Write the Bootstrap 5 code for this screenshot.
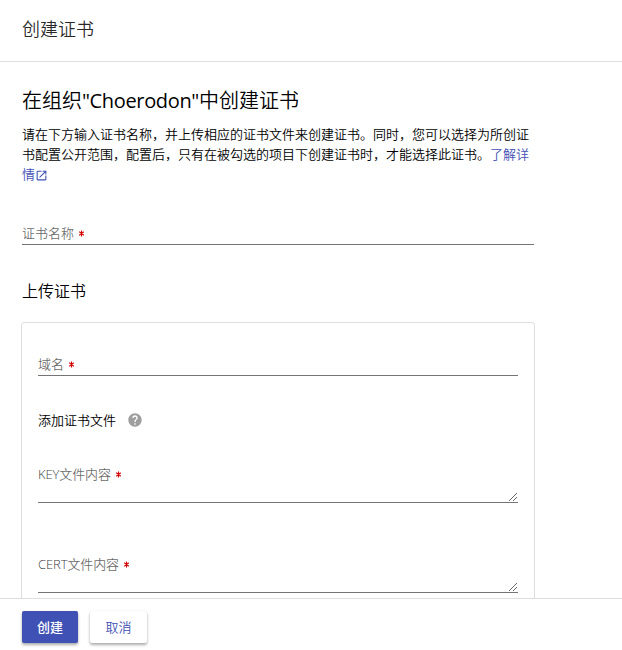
<!DOCTYPE html>
<html lang="zh-CN">
<head>
<meta charset="utf-8">
<meta name="viewport" content="width=device-width, initial-scale=1">
<title>创建证书</title>
<link href="https://cdn.jsdelivr.net/npm/bootstrap@5.3.0/dist/css/bootstrap.min.css" rel="stylesheet">
<style>
body{font-family:"Open Sans","Noto Sans CJK SC",sans-serif;font-size:13px;font-weight:350;line-height:20px;color:#000}
.page-head{height:62px;padding:0 22px 3px;border-bottom:1px solid #dedede;font-size:18px;color:rgba(0,0,0,.85)}
.page-body{padding:24px 22px 0;min-height:0}
.content{width:513px}
.content h1{font-size:20px;line-height:30px;font-weight:350;margin:0 0 8px}
.content h1 span{font-weight:500;letter-spacing:-.35px}
.content h2{font-size:16px;line-height:24px;font-weight:350;margin:34px 0 19px}
.brand-link{color:#3f51b5;text-decoration:none}
.brand-link:hover{color:#303f9f}
.field{border-bottom:1px solid #757575;color:rgba(0,0,0,.6);width:512px;height:22px}
.field-name{margin-top:39px}
.field-area{height:39px}
.field-key{margin-top:34px}
.field-cert{margin-top:51px}
.file-title{margin-top:34px}
.help-icon{margin-left:11px}
.panel{border:1px solid #dedede;border-radius:3px;padding:31px 16px 0;height:400px;width:514px;margin-left:-1px}
.panel .field{width:480px}
.req{color:#d50000;width:6px;height:7px;margin:7px 0 0 5px}
.latin{letter-spacing:-.1px}
.latin span{color:rgba(0,0,0,.82)}
.foot{height:52px;border-top:1px solid #dedede;padding:12px 22px;gap:12px}
.act{height:32px;width:57px;font-size:13px;line-height:20px;padding:6px 0;border-radius:2px;border:0;box-shadow:0 2px 3px rgba(0,0,0,.32),0 0 1px rgba(0,0,0,.15);font-weight:350}
.act-main,.act-main:hover{background:#3f51b5;color:#fff;width:56px;font-weight:500}
.act-alt,.act-alt:hover{background:#fff;color:#3f51b5}
</style>
<script src="https://cdn.jsdelivr.net/npm/bootstrap@5.3.0/dist/js/bootstrap.bundle.min.js"></script>
</head>
<body class="vh-100 overflow-hidden d-flex flex-column">
<svg class="d-none"><defs>
<symbol id="star" viewBox="0 0 6 7"><path d="M2.5 .5v6M.2 1.7l4.6 3.6M4.8 1.7L.2 5.3" fill="none" stroke="currentColor" stroke-width="1.1"/></symbol>
<symbol id="grip" viewBox="0 0 8 8"><path d="M0 8L8 0M4 8l4-4" fill="none" stroke="#444" stroke-width=".8"/></symbol>
</defs></svg>
<header class="page-head d-flex align-items-center flex-shrink-0">创建证书</header>
<main class="page-body flex-grow-1 overflow-hidden"><div class="content">
<h1>在组织<span>"Choerodon"</span>中创建证书</h1>
<p class="m-0">请在下方输入证书名称，并上传相应的证书文件来创建证书。同时，您可以选择为所创证书配置公开范围，配置后，只有在被勾选的项目下创建证书时，才能选择此证书。<a class="brand-link" href="#">了解详情<svg width="13" height="13" viewBox="0 0 24 24" fill="currentColor"><path d="M19 19H5V5h7V3H5a2 2 0 0 0-2 2v14a2 2 0 0 0 2 2h14c1.1 0 2-.9 2-2v-7h-2v7zM14 3v2h3.59l-9.83 9.83 1.41 1.41L19 6.41V10h2V3h-7z"/></svg></a></p>
<div class="field field-name d-flex">证书名称<svg class="req"><use href="#star"/></svg></div>
<h2>上传证书</h2>
<section class="panel">
<div class="field d-flex">域名<svg class="req"><use href="#star"/></svg></div>
<div class="file-title d-flex align-items-center"><span>添加证书文件</span><svg class="help-icon" width="16" height="16" viewBox="0 0 24 24" fill="#9e9e9e"><path d="M12 2C6.48 2 2 6.48 2 12s4.48 10 10 10 10-4.48 10-10S17.52 2 12 2zm1 17h-2v-2h2v2zm2.07-7.75-.9.92C13.45 12.9 13 13.5 13 15h-2v-.5c0-1.1.45-2.1 1.17-2.83l1.24-1.26c.37-.36.59-.86.59-1.41a2 2 0 0 0-4 0H8a4 4 0 0 1 8 0c0 .88-.36 1.68-.93 2.25z"/></svg></div>
<div class="field field-area field-key d-flex"><span class="latin"><span>KEY</span>文件内容</span><svg class="req"><use href="#star"/></svg><svg class="ms-auto align-self-end" width="9" height="9"><use href="#grip" width="8" height="8"/></svg></div>
<div class="field field-area field-cert d-flex"><span class="latin"><span>CERT</span>文件内容</span><svg class="req"><use href="#star"/></svg><svg class="ms-auto align-self-end" width="9" height="9"><use href="#grip" width="8" height="8"/></svg></div>
</section>
</div></main>
<footer class="foot d-flex flex-shrink-0"><button class="btn act act-main">创建</button><button class="btn act act-alt">取消</button></footer>
</body>
</html>
